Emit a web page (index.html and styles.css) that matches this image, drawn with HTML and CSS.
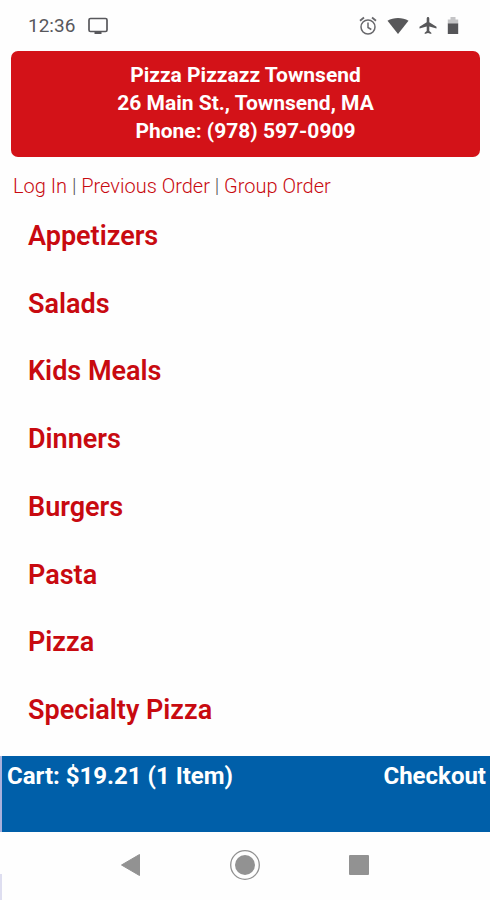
FILE: index.html
```html
<!DOCTYPE html>
<html lang="en">
<head>
<meta charset="utf-8">
<meta name="viewport" content="width=device-width, initial-scale=1">
<title>Pizza Pizzazz Townsend</title>
<link rel="stylesheet" href="styles.css">
</head>
<body>
<div class="status">
  <span class="clock">12:36</span>
  <svg class="cast" width="20" height="18" viewBox="0 0 20 18" fill="none" stroke="#58585c" stroke-width="1.7"><rect x="1" y="1.5" width="18" height="13" rx="1.5"/><path d="M6.5 15.9h7" stroke-width="2.2"/></svg>
  <div class="indicators">
    <svg width="18" height="20" viewBox="0 0 18 20" fill="none" stroke="#68686c" stroke-width="1.5"><circle cx="9" cy="11" r="7"/><path d="M9 6.5v5l3.3 2"/><path d="M1 4.8 5 1.5M17 4.8l-4-3.3" stroke-width="1.8"/></svg>
    <svg width="22" height="20" viewBox="0 0 22 20"><path d="M.5 4.8C6.5 1 15.500 1 21.500 4.800L11 18z" fill="#58585a"/></svg>
    <svg width="18" height="20" viewBox="0 0 18 20"><path d="M17.500 12.500v-1.800L10.300 6.300V2.500C10.300 1.700 9.800 1 9 1S7.700 1.700 7.700 2.500v3.800L.5 10.700v1.800l7.200-2.100v4.700L5.700 16.700V18L9 17l3.300 1v-1.300l-2-1.600v-4.700z" fill="#58585a"/></svg>
    <svg width="12" height="20" viewBox="0 0 12 20"><path d="M.8 3.500h2.700V1h5v2.500h2.700V8H.8z" fill="#c4c4c6"/><path d="M.8 7.500h10.400V18H.8z" fill="#555558"/></svg>
  </div>
</div>
<header class="store">
  <div>Pizza Pizzazz Townsend</div>
  <div>26 Main St., Townsend, MA</div>
  <div>Phone: (978) 597-0909</div>
</header>
<nav class="links"><a href="#login">Log In</a> | <a href="#previous">Previous Order</a> | <a href="#group">Group Order</a></nav>
<main class="menu">
  <a href="#appetizers">Appetizers</a>
  <a href="#salads">Salads</a>
  <a href="#kids">Kids Meals</a>
  <a href="#dinners">Dinners</a>
  <a href="#burgers">Burgers</a>
  <a href="#pasta">Pasta</a>
  <a href="#pizza">Pizza</a>
  <a href="#specialty">Specialty Pizza</a>
</main>
<footer class="cart">
  <a href="#cart">Cart: $19.21 (1 Item)</a>
  <a href="#checkout">Checkout</a>
</footer>
<div class="system">
  <button type="button" aria-label="Back"><svg width="32" height="32" viewBox="0 0 32 32"><path d="M6.500 16 24.500 5.500v21z" fill="#929292" stroke="#929292" stroke-linejoin="round"/></svg></button>
  <button type="button" aria-label="Home"><svg width="32" height="32" viewBox="0 0 32 32"><circle cx="16" cy="16" r="14.300" fill="none" stroke="#929292" stroke-width="1.300"/><circle cx="16" cy="16" r="10" fill="#929292"/></svg></button>
  <button type="button" aria-label="Recent apps"><svg width="32" height="32" viewBox="0 0 32 32"><rect x="6" y="6" width="20" height="20" rx="1" fill="#929292"/></svg></button>
</div>
</body>
</html>
```
FILE: styles.css
```css
* {
  box-sizing: border-box;
}

body {
  margin: 0;
  min-height: 100vh;
  display: flex;
  flex-direction: column;
  background: #fefefe;
  font-family: Roboto, "Liberation Sans", sans-serif;
}

a {
  color: #c80a10;
  text-decoration: none;
}

svg {
  display: block;
}

.status {
  display: flex;
  align-items: center;
  padding: 14px 31px 13px 28px;
  line-height: 24px;
  font-size: 19px;
  color: #58585c;
}

.cast {
  margin-left: 13px;
}

.indicators {
  display: flex;
  gap: 10px;
  margin-left: auto;
}

.store {
  margin: 0 10px 0 11px;
  padding: 10px 12px 12px;
  border-radius: 7px;
  background: #d31218;
  color: #fff;
  font-size: 21px;
  font-weight: 700;
  line-height: 28px;
  text-align: center;
}

.links {
  padding: 18px 13px 5px;
  font-size: 20px;
  font-weight: 300;
  line-height: 22px;
  color: #555;
}

.menu {
  flex: 1;
  display: grid;
  grid-auto-rows: 1fr;
  padding: 0 28px 12px;
  font-size: 27px;
  font-weight: 600;
}

.menu a {
  display: flex;
  align-items: center;
}

.cart {
  display: flex;
  justify-content: space-between;
  padding: 5px 4px 41px 5px;
  border-left: 2px solid #a9b1dc;
  background: #005fa9;
  font-size: 24px;
  font-weight: 700;
  line-height: 30px;
}

.cart a {
  color: #fff;
}

.system {
  display: flex;
  justify-content: center;
  gap: 82px;
  padding: 17px 0 19px;
  background: linear-gradient(#dedef0, #dedef0) left bottom / 2px 26px no-repeat;
}

.system button {
  padding: 0;
  border: 0;
  background: none;
}
```
